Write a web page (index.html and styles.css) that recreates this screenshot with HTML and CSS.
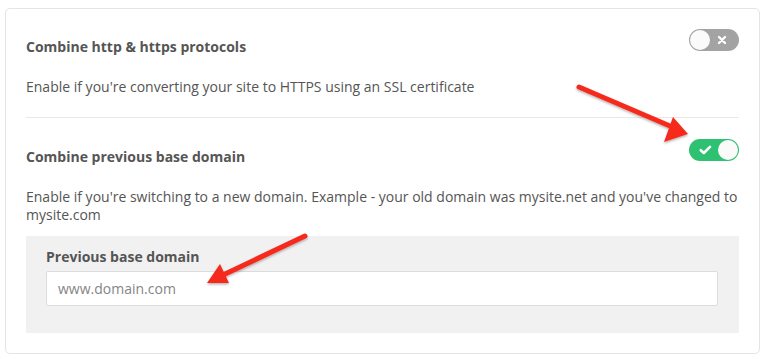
FILE: index.html
```html
<!DOCTYPE html>
<html lang="en">
<head>
  <meta charset="UTF-8" />
  <title>Domain settings</title>
  <link rel="stylesheet" href="styles.css">
</head>
<body>
  <div class="settings-card">
    <div class="setting">
      <div class="setting-head">
        <h3 class="setting-title">Combine http &amp; https protocols</h3>
        <span class="toggle toggle-off">
          <span class="knob"></span>
          <svg class="toggle-icon" width="10" height="10" viewBox="0 0 10 10"><path d="M2 2 L8 8 M8 2 L2 8" stroke="#fff" stroke-width="2.4" stroke-linecap="round"/></svg>
        </span>
      </div>
      <p class="setting-desc">Enable if you're converting your site to HTTPS using an SSL certificate</p>
    </div>

    <div class="setting setting-last">
      <div class="setting-head">
        <h3 class="setting-title">Combine previous base domain</h3>
        <span class="toggle toggle-on">
          <svg class="toggle-icon" width="13" height="10" viewBox="0 0 13 10"><path d="M1.8 5.2 L4.8 8 L11 1.8" stroke="#fff" stroke-width="2.6" fill="none" stroke-linecap="round" stroke-linejoin="round"/></svg>
          <span class="knob"></span>
        </span>
      </div>
      <p class="setting-desc">Enable if you're switching to a new domain. Example - your old domain was mysite.net and you've changed to mysite.com</p>

      <div class="subfield">
        <label class="subfield-label" for="prevDomain">Previous base domain</label>
        <input id="prevDomain" class="text-input" type="text" placeholder="www.domain.com">
      </div>
    </div>
  </div>

  <svg class="arrows" width="770" height="359" viewBox="0 0 770 359">
    <defs>
      <filter id="shade" x="-20%" y="-20%" width="140%" height="140%">
        <feDropShadow dx="0" dy="1.5" stdDeviation="1.2" flood-color="#000" flood-opacity="0.3"/>
      </filter>
    </defs>
    <g fill="#f52a1d" stroke="#f52a1d" filter="url(#shade)">
      <line x1="579" y1="87" x2="670" y2="126" stroke-width="5" stroke-linecap="round"/>
      <polygon points="688,134 664,142 673,117" stroke="none"/>
      <line x1="305" y1="236" x2="223" y2="275" stroke-width="5" stroke-linecap="round"/>
      <polygon points="207,283 220,264 229,283" stroke="none"/>
    </g>
  </svg>
</body>
</html>
```

FILE: styles.css
```css
body {
  margin: 0;
  padding: 8px 0 0 5px;
  background: #fff;
  font-family: 'Open Sans', 'Liberation Sans', sans-serif;
  color: #555;
}

.settings-card {
  width: 713px;
  border: 1px solid #e4e4e4;
  border-radius: 5px;
  padding: 20px 20px 20px 20px;
}

.setting {
  border-bottom: 1px solid #e8e8e8;
  padding-bottom: 21px;
}

.setting-last {
  border-bottom: none;
  padding-top: 21px;
  padding-bottom: 0;
}

.setting-head {
  display: flex;
  justify-content: space-between;
  align-items: flex-start;
}

.setting-title {
  margin: 9px 0 0 0;
  font-size: 14px;
  line-height: 18px;
  font-weight: 700;
  color: #555;
}

.setting-desc {
  margin: 22px 0 0 0;
  font-size: 14px;
  line-height: 18px;
  color: #555;
}

/* toggles */
.toggle {
  width: 50px;
  height: 22px;
  border-radius: 11px;
  box-sizing: border-box;
  padding: 1px;
  display: flex;
  align-items: center;
  justify-content: space-between;
}

.toggle-off {
  background: #a3a3a3;
  padding-right: 12px;
}

.toggle-on {
  background: #2fc172;
  padding-left: 10px;
}

.knob {
  width: 20px;
  height: 20px;
  border-radius: 50%;
  background: #fafafa;
}

.toggle-icon {
  display: block;
}

/* previous domain box */
.subfield {
  margin-top: 12px;
  background: #f1f1f1;
  padding: 12px 21px 27px 20px;
}

.subfield-label {
  display: block;
  font-size: 14px;
  line-height: 18px;
  font-weight: 700;
  color: #555;
  margin-bottom: 5px;
}

.text-input {
  display: block;
  width: 100%;
  box-sizing: border-box;
  height: 35px;
  border: 1px solid #dcdcdc;
  border-radius: 2px;
  background: #fff;
  padding: 0 11px;
  font-family: 'Open Sans', 'Liberation Sans', sans-serif;
  font-size: 14px;
  color: #555;
}

.text-input::placeholder {
  color: #858585;
}

.arrows {
  position: absolute;
  left: 0;
  top: 0;
  pointer-events: none;
}
```
